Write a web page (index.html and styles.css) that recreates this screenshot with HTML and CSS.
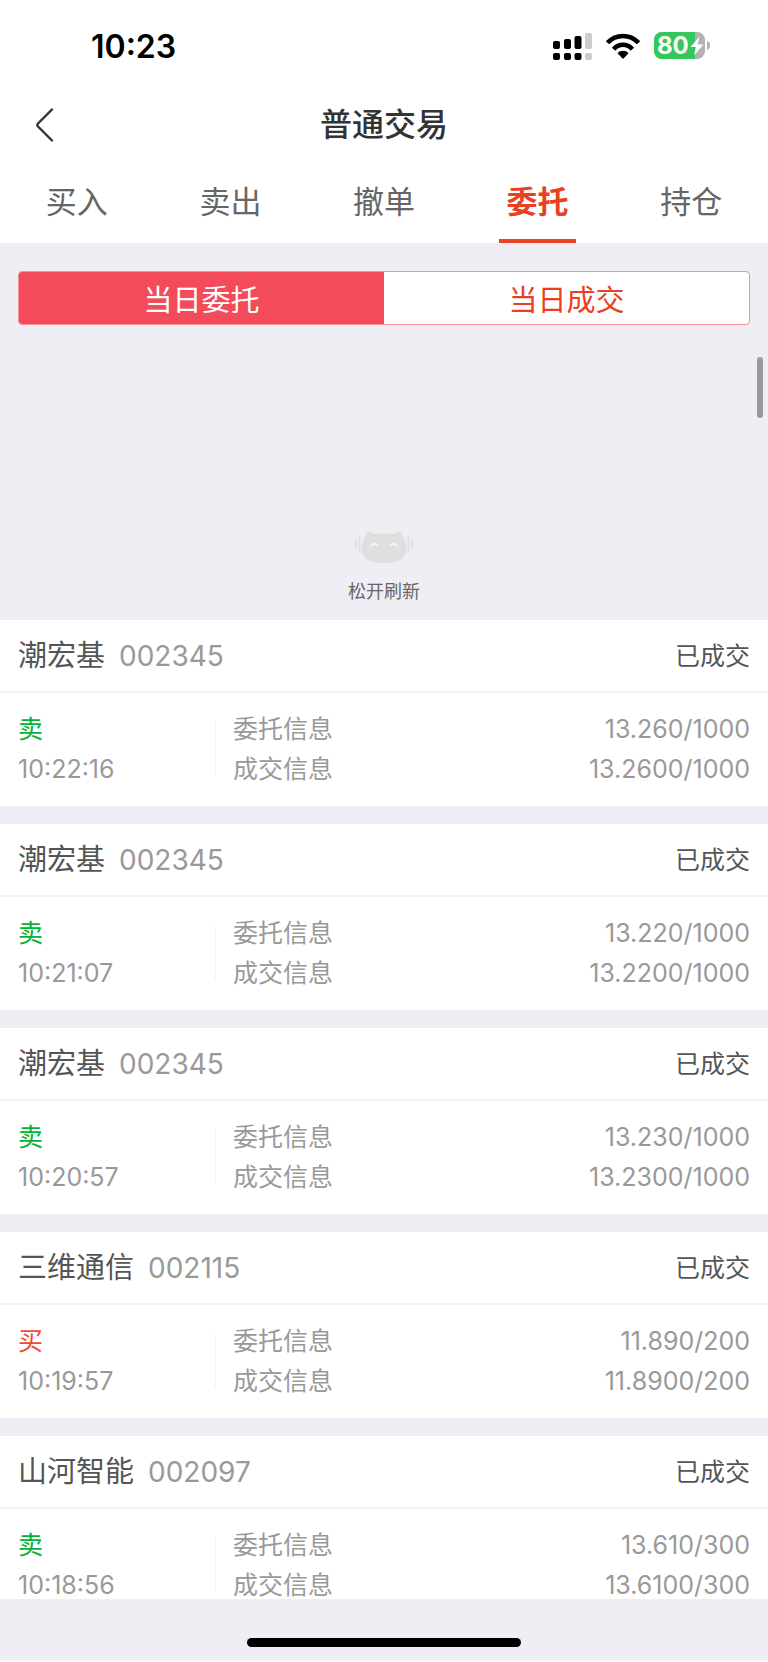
FILE: index.html
```html
<!DOCTYPE html>
<html lang="zh-CN">
<head>
  <meta charset="UTF-8">
  <meta name="viewport" content="width=device-width, initial-scale=1">
  <title>普通交易</title>
  <link rel="stylesheet" href="styles.css">
</head>
<body>
  <div class="status">
    <span class="time">10:23</span>
    <div class="status-icons">
      <svg class="signal" width="40" height="28" viewBox="0 0 40 28">
        <rect x="1" y="9" width="7" height="8" rx="2"/>
        <rect x="12" y="7" width="7" height="10" rx="2"/>
        <rect x="22.500" y="4" width="7" height="13" rx="2"/>
        <rect x="1" y="21" width="7" height="7" rx="2"/>
        <rect x="12" y="21" width="7" height="7" rx="2"/>
        <rect x="22.500" y="21" width="7" height="7" rx="2"/>
        <rect class="off" x="33" y="1" width="7" height="16" rx="2"/>
        <rect class="off" x="33" y="21" width="7" height="7" rx="2"/>
      </svg>
      <svg class="wifi" width="34" height="26" viewBox="0 0 34 26">
        <path d="M1.500 9.800C10 .6 24 .6 32.500 9.800" fill="none" stroke="#000" stroke-width="4.500"/>
        <path d="M7.600 16.200C12.800 10.400 21.200 10.400 26.400 16.200" fill="none" stroke="#000" stroke-width="4.500"/>
        <path d="M11.500 20.200C14.600 17 19.400 17 22.500 20.200L17 26z"/>
      </svg>
      <svg class="battery" width="58" height="28" viewBox="0 0 58 28">
        <defs>
          <clipPath id="shell"><rect x="0" y="0" width="51" height="27" rx="8"/></clipPath>
        </defs>
        <g clip-path="url(#shell)">
          <rect width="51" height="27" fill="#b3b3b5"/>
          <rect width="41" height="27" fill="#34c759"/>
        </g>
        <path d="M53 9C57.300 10.500 57.300 16.500 53 18z" fill="#b3b3b5"/>
        <text x="3" y="22" class="level">80</text>
        <path d="M45.500 4.500L36.500 15H42L40 23.500L49.500 12.400H43.700z" fill="#fff"/>
      </svg>
    </div>
  </div>

  <header class="title-bar">
    <button class="back" type="button" aria-label="返回">
      <svg width="18" height="34" viewBox="0 0 18 34">
        <path d="M16 1.500L2 15.500Q.6 17 2 18.500L16 32.500" fill="none" stroke="#333" stroke-width="2.400" stroke-linecap="round"/>
      </svg>
    </button>
    <h1>普通交易</h1>
  </header>

  <nav class="tabs">
    <a href="#buy">买入</a>
    <a href="#sell">卖出</a>
    <a href="#cancel">撤单</a>
    <a class="active" href="#entrust">委托</a>
    <a href="#hold">持仓</a>
  </nav>

  <main class="content">
    <div class="switch">
      <button class="on" type="button">当日委托</button>
      <button type="button">当日成交</button>
    </div>

    <div class="scroll">
      <div class="scroll-thumb"></div>
      <!-- 下拉刷新 -->
      <div class="refresh">
        <svg width="58" height="34" viewBox="0 0 58 34">
          <path d="M12 2.500Q13 .5 15.500 2L20 4Q29 2.500 38 4L42.500 2Q45 .5 46 2.500L48.500 8Q52 13 51.500 20C51 29 43 33 29 33S7 29 6.500 20Q6.500 13 9.500 8z" fill="#dfdfe0"/>
          <path d="M15.500 16.500Q19.500 11 23.500 16.500M34.500 16.500Q38.500 11 42.500 16.500" fill="none" stroke="#f3f3f5" stroke-width="2"/>
          <path d="M4.500 7V21M53.500 7V21" stroke="#dfdfe0" stroke-width="2"/>
          <path d="M1 9V19M57 9V19" stroke="#dfdfe0" stroke-width="1.500"/>
        </svg>
        <p>松开刷新</p>
      </div>

      <ul class="orders">
        <li>
          <div class="order-head">
            <h2>潮宏基</h2>
            <span class="code">002345</span>
            <span class="state">已成交</span>
          </div>
          <div class="order-body">
            <div class="side">
              <p class="sell">卖</p>
              <p>10:22:16</p>
            </div>
            <dl>
              <dt>委托信息</dt><dd>13.260/1000</dd>
              <dt>成交信息</dt><dd>13.2600/1000</dd>
            </dl>
          </div>
        </li>
        <li>
          <div class="order-head">
            <h2>潮宏基</h2>
            <span class="code">002345</span>
            <span class="state">已成交</span>
          </div>
          <div class="order-body">
            <div class="side">
              <p class="sell">卖</p>
              <p>10:21:07</p>
            </div>
            <dl>
              <dt>委托信息</dt><dd>13.220/1000</dd>
              <dt>成交信息</dt><dd>13.2200/1000</dd>
            </dl>
          </div>
        </li>
        <li>
          <div class="order-head">
            <h2>潮宏基</h2>
            <span class="code">002345</span>
            <span class="state">已成交</span>
          </div>
          <div class="order-body">
            <div class="side">
              <p class="sell">卖</p>
              <p>10:20:57</p>
            </div>
            <dl>
              <dt>委托信息</dt><dd>13.230/1000</dd>
              <dt>成交信息</dt><dd>13.2300/1000</dd>
            </dl>
          </div>
        </li>
        <li>
          <div class="order-head">
            <h2>三维通信</h2>
            <span class="code">002115</span>
            <span class="state">已成交</span>
          </div>
          <div class="order-body">
            <div class="side">
              <p class="buy">买</p>
              <p>10:19:57</p>
            </div>
            <dl>
              <dt>委托信息</dt><dd>11.890/200</dd>
              <dt>成交信息</dt><dd>11.8900/200</dd>
            </dl>
          </div>
        </li>
        <li>
          <div class="order-head">
            <h2>山河智能</h2>
            <span class="code">002097</span>
            <span class="state">已成交</span>
          </div>
          <div class="order-body">
            <div class="side">
              <p class="sell">卖</p>
              <p>10:18:56</p>
            </div>
            <dl>
              <dt>委托信息</dt><dd>13.610/300</dd>
              <dt>成交信息</dt><dd>13.6100/300</dd>
            </dl>
          </div>
        </li>
      </ul>
    </div>
  </main>

  <footer class="home">
    <div class="home-bar"></div>
  </footer>
</body>
</html>
```
FILE: styles.css
```css
*{
  margin: 0;
  padding: 0;
  box-sizing: border-box;
}
body{
  display: flex;
  flex-direction: column;
  height: 100vh;
  background: #fff;
  color: #999;
  font-family: Inter, "Noto Sans CJK SC", sans-serif;
  overflow: hidden;
}
ul{
  list-style: none;
}
a{
  text-decoration: none;
}
button{
  border: 0;
  background: none;
  font-family: inherit;
}
svg{
  display: block;
}

/*状态栏*/
.status{
  display: flex;
  flex: none;
  justify-content: space-between;
  align-items: center;
  height: 92px;
  padding: 0 56px 0 91px;
}
.time{
  color: #000;
  font-size: 32px;
  font-weight: 600;
}
.status-icons{
  display: flex;
  align-items: center;
  gap: 14px;
}
.signal .off{
  fill: #ccc;
}
.level{
  fill: #fff;
  font-size: 24px;
  font-weight: 700;
}

/*标题*/
.title-bar{
  display: grid;
  flex: none;
  grid-template-columns: 72px 1fr 72px;
  align-items: center;
  height: 65px;
}
.back{
  padding-left: 36px;
}
.title-bar h1{
  color: #333;
  font-size: 32px;
  font-weight: 500;
  line-height: 40px;
  text-align: center;
}

.tabs{
  display: flex;
  flex: none;
  height: 86px;
}
.tabs a{
  position: relative;
  flex: 1;
  color: #666;
  font-size: 31px;
  line-height: 90px;
  text-align: center;
}
.tabs .active{
  color: #e93f22;
  font-weight: 700;
}
.tabs .active:after{
  content: '';
  position: absolute;
  left: 25%;
  right: 25%;
  bottom: 0;
  height: 4px;
  background: #e64525;
}

.content{
  display: flex;
  flex: 1;
  flex-direction: column;
  min-height: 0;
  background: #efeef4;
}
.switch{
  display: flex;
  flex: none;
  height: 54px;
  margin: 28px 18px 0;
  border: 1px solid #f78f99;
  border-radius: 4px;
  background: #fff;
  overflow: hidden;
}
.switch button{
  flex: 1;
  color: #e93f22;
  font-size: 29px;
}
.switch .on{
  background: #f34b59;
  color: #fff;
}

.scroll{
  position: relative;
  flex: 1;
  min-height: 0;
  overflow: hidden;
}
.scroll-thumb{
  position: absolute;
  top: 32px;
  right: 5px;
  width: 6px;
  height: 61px;
  border-radius: 3px;
  background: #9a9a9d;
}
.refresh{
  display: flex;
  flex-direction: column;
  justify-content: flex-end;
  align-items: center;
  gap: 16px;
  height: 295px;
  padding-bottom: 16px;
  color: #666;
  font-size: 18px;
  line-height: 24px;
}

/*委托列表*/
.orders{
  display: flex;
  flex-direction: column;
  gap: 18px;
}
.orders li{
  background: #fff;
}
.order-head{
  display: flex;
  align-items: center;
  height: 73px;
  padding: 0 18px;
  border-bottom: 2px solid #f1f1f3;
  font-size: 28px;
  line-height: 40px;
}
.order-head h2{
  color: #555;
  font-size: 29px;
  font-weight: 400;
}
.code{
  margin-left: 14px;
}
.state{
  margin-left: auto;
  color: #555;
  font-size: 25px;
}
.order-body{
  display: flex;
  padding: 16px 18px 17px;
  font-size: 25px;
  line-height: 40px;
}
.side{
  flex: 0 0 197px;
}
.sell{
  color: #09b037;
}
.buy{
  color: #f04a30;
}
.order-body dl{
  display: grid;
  flex: 1;
  grid-template-columns: auto 1fr;
  padding-left: 18px;
  background: linear-gradient(#f3f3f5, #f3f3f5) left center / 1px 54px no-repeat;
}
.order-body dd{
  text-align: right;
}

.home{
  display: flex;
  flex: none;
  justify-content: center;
  height: 63px;
  padding-top: 39px;
  border-bottom: 2px solid #f9f9fb;
  background: #efeef4;
}
.home-bar{
  width: 274px;
  height: 9px;
  border-radius: 5px;
  background: #000;
}
```
